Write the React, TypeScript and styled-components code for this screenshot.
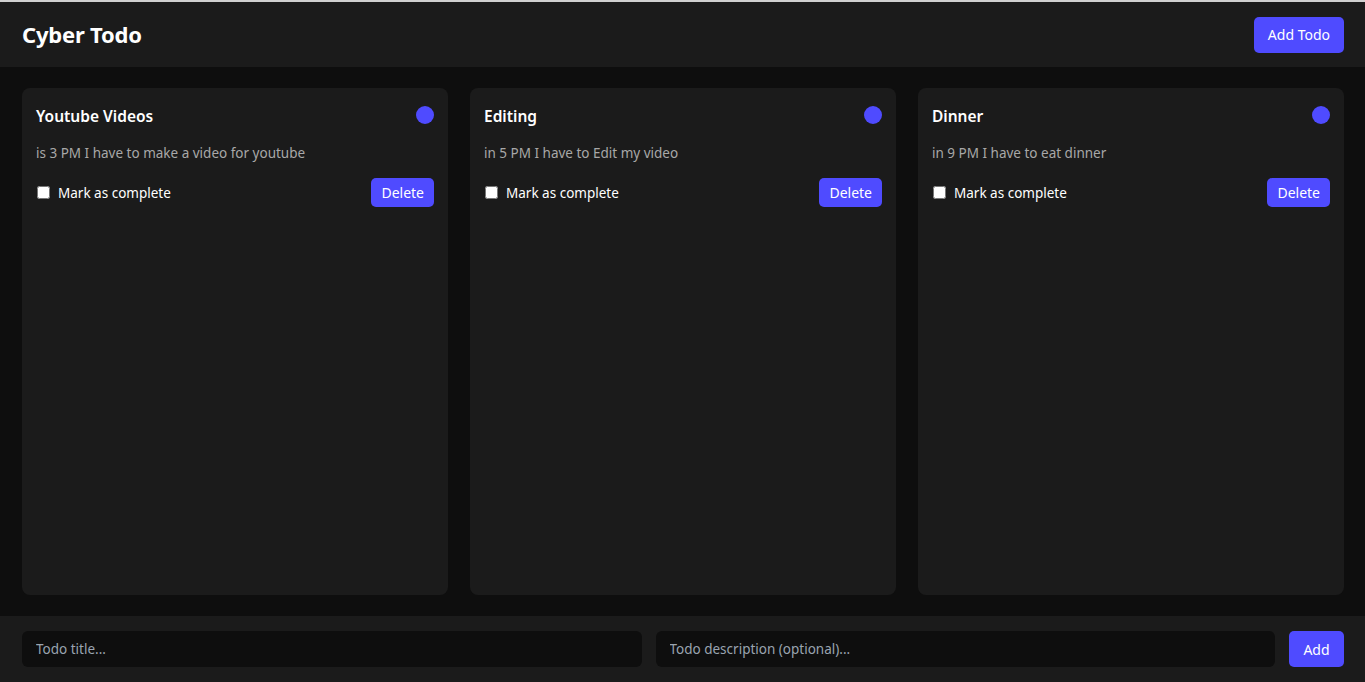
import React from "react";
import styled, { createGlobalStyle } from "styled-components";

const Global = createGlobalStyle`
  html, body { margin: 0; padding: 0; background: #0e0e0e; }
  body { font-family: "Noto Sans", "Open Sans", sans-serif; color: #fff; }
  * { box-sizing: border-box; }
`;

const Page = styled.div`
  height: 682px;
  display: flex;
  flex-direction: column;
  border-top: 2px solid #d0d0d0;
  background: #0e0e0e;
  overflow: hidden;
`;

const Header = styled.header`
  height: 65px;
  flex: none;
  background: #1b1b1b;
  display: flex;
  align-items: center;
  justify-content: space-between;
  padding: 0 21px 0 22px;
`;

const Title = styled.h1`
  margin: 0 0 1px;
  font-size: 22px;
  font-weight: 700;
  color: #fff;
  letter-spacing: -0.2px;
`;

const Button = styled.button<{ $h?: number; $w?: number; $px?: number }>`
  height: ${(p) => p.$h ?? 36}px;
  ${(p) => (p.$w ? `width: ${p.$w}px;` : "")}
  padding: 0 ${(p) => p.$px ?? 14}px;
  background: #4f4bff;
  color: #fff;
  border: none;
  border-radius: 5px;
  font-family: inherit;
  font-size: 14px;
  cursor: pointer;
  flex: none;
`;

const Board = styled.main`
  flex: 1;
  display: grid;
  grid-template-columns: repeat(3, 1fr);
  gap: 22px;
  padding: 21px 21px 21px 22px;
`;

const Card = styled.section`
  background: #1b1b1b;
  border-radius: 8px;
  padding: 17px 14px;
  display: flex;
  flex-direction: column;
`;

const CardHead = styled.div`
  display: flex;
  align-items: center;
  justify-content: space-between;
  height: 22px;
`;

const CardTitle = styled.h2`
  margin: 0;
  font-size: 15.5px;
  font-weight: 600;
  color: #fff;
`;

const Dot = styled.span`
  width: 18px;
  height: 18px;
  margin-top: -2px;
  border-radius: 50%;
  background: #4f4bff;
`;

const Desc = styled.p`
  margin: 16px 0 0;
  font-size: 13.5px;
  color: #a8a8a8;
  line-height: 20px;
`;

const Row = styled.div`
  margin-top: 15px;
  display: flex;
  align-items: center;
  justify-content: space-between;
`;

const Check = styled.label`
  display: flex;
  align-items: center;
  gap: 8px;
  font-size: 13.5px;
  color: #fff;
  input {
    margin: 0 0 0 1px;
    width: 13px;
    height: 13px;
  }
`;

const Footer = styled.footer`
  height: 66px;
  flex: none;
  background: #1b1b1b;
  display: flex;
  align-items: center;
  gap: 14px;
  padding: 0 21px 0 22px;
`;

const Input = styled.input`
  flex: 1;
  min-width: 0;
  height: 36px;
  background: #0e0e0e;
  border: none;
  border-radius: 6px;
  padding: 0 14px;
  color: #fff;
  font-family: inherit;
  font-size: 13.5px;
  outline: none;
  &::placeholder { color: #9aa4b0; }
`;

const todos = [
  { title: "Youtube Videos", desc: "is 3 PM I have to make a video for youtube" },
  { title: "Editing", desc: "in 5 PM I have to Edit my video" },
  { title: "Dinner", desc: "in 9 PM I have to eat dinner" },
];

export default function App() {
  return (
    <>
      <Global />
      <Page>
        <Header>
          <Title>Cyber Todo</Title>
          <Button>Add Todo</Button>
        </Header>
        <Board>
          {todos.map((t) => (
            <Card key={t.title}>
              <CardHead>
                <CardTitle>{t.title}</CardTitle>
                <Dot />
              </CardHead>
              <Desc>{t.desc}</Desc>
              <Row>
                <Check>
                  <input type="checkbox" />
                  Mark as complete
                </Check>
                <Button $h={29} $px={10}>Delete</Button>
              </Row>
            </Card>
          ))}
        </Board>
        <Footer>
          <Input placeholder="Todo title..." />
          <Input placeholder="Todo description (optional)..." />
          <Button $w={55} $px={0}>Add</Button>
        </Footer>
      </Page>
    </>
  );
}
